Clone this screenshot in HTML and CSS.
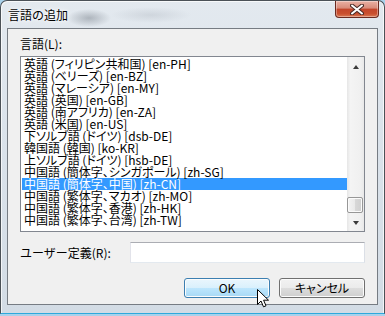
FILE: index.html
```html
<!DOCTYPE html>
<html lang="ja">
<head>
    <meta charset="UTF-8" />
    <meta name="viewport" content="width=device-width, initial-scale=1.0" />
    <title>言語の追加</title>
    <link rel="stylesheet" href="styles.css">
</head>
<body>
    <div class="window">
        <div class="titlebar">
            <span class="title">言語の追加</span>
            <button class="close-btn" aria-label="閉じる">
                <svg width="14" height="11" viewBox="0 0 14 11">
                    <path d="M2 1.5 L12 9.5 M12 1.5 L2 9.5" stroke="#4a2a26" stroke-width="4" stroke-linecap="round"/>
                    <path d="M2 1.5 L12 9.5 M12 1.5 L2 9.5" stroke="#ffffff" stroke-width="2" stroke-linecap="round"/>
                </svg>
            </button>
        </div>

        <div class="client">
            <div class="field-label">言語(L):</div>

            <div class="listbox">
                <ul class="list-items">
                    <li>英語 (フィリピン共和国) [en-PH]</li>
                    <li>英語 (ベリーズ) [en-BZ]</li>
                    <li>英語 (マレーシア) [en-MY]</li>
                    <li>英語 (英国) [en-GB]</li>
                    <li>英語 (南アフリカ) [en-ZA]</li>
                    <li>英語 (米国) [en-US]</li>
                    <li>下ソルブ語 (ドイツ) [dsb-DE]</li>
                    <li>韓国語 (韓国) [ko-KR]</li>
                    <li>上ソルブ語 (ドイツ) [hsb-DE]</li>
                    <li>中国語 (簡体字、シンガポール) [zh-SG]</li>
                    <li class="selected">中国語 (簡体字、中国) [zh-CN]</li>
                    <li>中国語 (繁体字、マカオ) [zh-MO]</li>
                    <li>中国語 (繁体字、香港) [zh-HK]</li>
                    <li>中国語 (繁体字、台湾) [zh-TW]</li>
                </ul>
                <div class="scrollbar">
                    <div class="scroll-arrow"><span class="arrow-up"></span></div>
                    <div class="scroll-track"><div class="scroll-thumb"></div></div>
                    <div class="scroll-arrow"><span class="arrow-down"></span></div>
                </div>
            </div>

            <div class="custom-row">
                <label for="custom-input" class="custom-label">ユーザー定義(R):</label>
                <input type="text" id="custom-input" class="custom-input" />
            </div>

            <div class="button-row">
                <button class="dialog-button default-button">OK</button>
                <button class="dialog-button">キャンセル</button>
            </div>
        </div>

        <!-- mouse pointer over the OK button -->
        <svg class="cursor" width="13" height="20" viewBox="0 0 13 20">
            <path d="M0.5 0.5 L0.5 15.5 L4 12 L6.5 17.8 L9 16.8 L6.6 11.2 L11.5 11.2 Z" fill="#ffffff" stroke="#000000" stroke-width="1" stroke-linejoin="miter"/>
        </svg>
    </div>
</body>
</html>
```

FILE: styles.css
```css
/* General styles */
body {
    margin: 0;
    width: 385px;
    height: 316px;
    background: #a9d2ec;
    font-family: "Noto Sans CJK JP", "Noto Sans", sans-serif;
    color: #000;
    overflow: hidden;
}

.window {
    position: relative;
    width: 385px;
    height: 314px;
    box-sizing: border-box;
    border: 1px solid #4b5157;
    border-bottom-color: #2fa9dc;
    border-radius: 7px 7px 0 0;
    padding: 0 6px 8px 6px;
    background:
        radial-gradient(ellipse 22px 9px at 88px 17px, rgba(110, 118, 128, 0.45), rgba(110, 118, 128, 0)),
        radial-gradient(ellipse 40px 8px at 150px 14px, rgba(150, 158, 168, 0.25), rgba(150, 158, 168, 0)),
        linear-gradient(to bottom, #e3e9ef 0%, #dbe3eb 40%, #d3dce5 100%);
    box-shadow: inset 1px 1px 0 rgba(255, 255, 255, 0.7), inset -1px 0 0 rgba(255, 255, 255, 0.7);
}

/* Title bar */
.titlebar {
    display: flex;
    justify-content: space-between;
    height: 27px;
}

.title {
    align-self: center;
    margin-left: 1px;
    font-size: 12px;
    line-height: 14px;
    text-shadow: 0 0 6px #fff, 0 0 3px #fff;
}

.close-btn {
    align-self: flex-start;
    width: 44px;
    height: 17px;
    margin-right: -1px;
    padding: 0;
    border: 1px solid #6b2a20;
    border-top: none;
    border-radius: 0 0 4px 4px;
    background: linear-gradient(to bottom, #eab1a4 0%, #d88a79 45%, #c3452b 50%, #c9502f 80%, #db7a55 100%);
    box-shadow: inset 0 0 0 1px rgba(255, 255, 255, 0.35);
    display: flex;
    align-items: center;
    justify-content: center;
}

/* Client area */
.client {
    height: 277px;
    box-sizing: border-box;
    border: 1px solid #767c83;
    background: #f0f0f0;
    padding: 8px 12px 0 12px;
}

.field-label {
    font-size: 12px;
    line-height: 14px;
    margin-bottom: 5px;
}

/* List box */
.listbox {
    display: flex;
    width: 345px;
    height: 176px;
    box-sizing: border-box;
    border: 1px solid #828790;
    background: #fff;
}

.list-items {
    flex: 1;
    margin: 0;
    padding: 1px 0 0 1px;
    list-style: none;
    overflow: hidden;
    font-size: 12px;
    line-height: 12px;
    font-feature-settings: "palt";
    white-space: nowrap;
}

.list-items li {
    height: 12px;
    padding-left: 2px;
}

.list-items li.selected {
    background: #3399ff;
    color: #fff;
}

.scrollbar {
    width: 17px;
    display: flex;
    flex-direction: column;
    background: linear-gradient(to right, #e6e6e6 0%, #f4f4f4 20%, #f0f0f0 80%, #e9e9e9 100%);
}

.scroll-arrow {
    height: 17px;
    display: flex;
    align-items: center;
    justify-content: center;
}

.arrow-up {
    width: 0;
    height: 0;
    border-left: 3px solid transparent;
    border-right: 3px solid transparent;
    border-bottom: 4px solid #3b3b3b;
    margin-top: 3px;
}

.arrow-down {
    width: 0;
    height: 0;
    border-left: 3px solid transparent;
    border-right: 3px solid transparent;
    border-top: 4px solid #3b3b3b;
}

.scroll-track {
    flex: 1;
    display: flex;
    flex-direction: column;
    justify-content: flex-end;
    padding-bottom: 1px;
}

.scroll-thumb {
    width: 16px;
    height: 16px;
    box-sizing: border-box;
    border: 1px solid #979797;
    border-radius: 2px;
    background: linear-gradient(to right, #f4f4f4 0%, #e9e9e9 50%, #d8d8d8 51%, #cfcfcf 100%);
    box-shadow: inset 0 0 0 1px #fbfbfb;
}

/* User defined field */
.custom-row {
    display: flex;
    align-items: center;
    margin-top: 10px;
}

.custom-label {
    width: 110px;
    font-size: 12px;
    line-height: 14px;
}

.custom-input {
    width: 235px;
    height: 21px;
    box-sizing: border-box;
    margin: 0;
    border: 1px solid;
    border-color: #abadb3 #dbdfe6 #e3e9ef #e2e3ea;
    background: #fff;
    outline: none;
}

/* Buttons */
.button-row {
    display: flex;
    justify-content: flex-end;
    gap: 9px;
    margin-top: 15px;
}

.dialog-button {
    width: 86px;
    height: 20px;
    padding: 0;
    border: 1px solid #707070;
    border-radius: 3px;
    font-family: "Noto Sans CJK JP", "Noto Sans", sans-serif;
    font-size: 12px;
    line-height: 16px;
    font-feature-settings: "palt";
    color: #000;
    background: linear-gradient(to bottom, #f2f2f2 0%, #ebebeb 50%, #dddddd 50%, #cfcfcf 100%);
    box-shadow: inset 0 0 0 1px #fcfcfc;
}

.default-button {
    border-color: #3c7fb1;
    background: linear-gradient(to bottom, #eaf6fd 0%, #d9f0fc 50%, #bee6fd 50%, #a7d9f5 100%);
}

.cursor {
    position: absolute;
    left: 256px;
    top: 288px;
}
```
